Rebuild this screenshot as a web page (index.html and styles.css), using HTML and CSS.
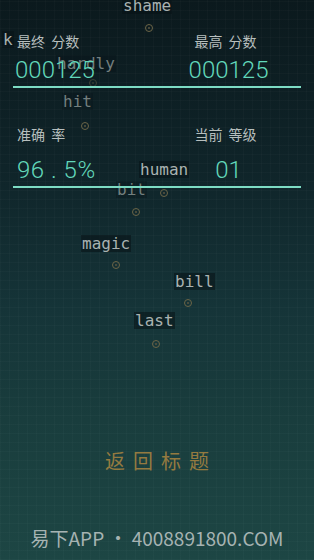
FILE: index.html
```html
<!DOCTYPE html>
<html lang="zh">
<head>
<meta charset="utf-8">
<title>结果</title>
<link rel="stylesheet" href="styles.css">
</head>
<body>
<div class="screen">
  <div class="field">
    <span class="word" style="left:122px;top:-3px">shame</span>
    <span class="ring" style="left:145px;top:24px"></span>
    <span class="word" style="left:2px;top:31px">k</span>
    <span class="word dim" style="left:56px;top:55px">hardly</span>
    <span class="ring dim" style="left:89px;top:79px"></span>
    <span class="word dim" style="left:62px;top:93px">hit</span>
    <span class="ring" style="left:81px;top:122px"></span>
    <span class="word" style="left:139px;top:161px">human</span>
    <span class="ring" style="left:160px;top:189px"></span>
    <span class="word dim" style="left:116px;top:181px">bit</span>
    <span class="ring" style="left:132px;top:208px"></span>
    <span class="word" style="left:81px;top:235px">magic</span>
    <span class="ring" style="left:112px;top:261px"></span>
    <span class="word" style="left:174px;top:273px">bill</span>
    <span class="ring" style="left:184px;top:299px"></span>
    <span class="word" style="left:134px;top:312px">last</span>
    <span class="ring" style="left:152px;top:340px"></span>
  </div>

  <section class="stats">
    <div class="row">
      <div class="cell">
        <div class="label">最终 分数</div>
        <div class="value">000125</div>
      </div>
      <div class="cell center">
        <div class="label">最高 分数</div>
        <div class="value">000125</div>
      </div>
    </div>
    <div class="row second">
      <div class="cell">
        <div class="label">准确 率</div>
        <div class="value spaced">96 . 5%</div>
      </div>
      <div class="cell center">
        <div class="label">当前 等级</div>
        <div class="value">01</div>
      </div>
    </div>
  </section>

  <div class="spacer"></div>
  <button class="back">返回标题</button>
  <footer class="footer">易下APP • 4008891800.COM</footer>
</div>
</body>
</html>
```

FILE: styles.css
```css
html, body {
  margin: 0;
  padding: 0;
  background: #0d1b1f;
}

.screen {
  position: relative;
  width: 314px;
  height: 560px;
  overflow: hidden;
  display: flex;
  flex-direction: column;
  padding-bottom: 10px;
  box-sizing: border-box;
  background:
    repeating-linear-gradient(0deg, rgba(255,255,255,0.018) 0 1px, transparent 1px 9px),
    repeating-linear-gradient(90deg, rgba(255,255,255,0.018) 0 1px, transparent 1px 9px),
    linear-gradient(180deg, #0b191d 0%, #0f2429 30%, #153438 55%, #193d3d 75%, #1d4644 100%);
  font-family: "Noto Sans CJK SC", "Noto Sans", sans-serif;
}

.field {
  position: absolute;
  inset: 0;
  z-index: 0;
}

.word {
  position: absolute;
  font-family: "DejaVu Sans Mono", monospace;
  font-size: 16px;
  line-height: 17px;
  padding: 0 1px;
  color: #a9b2b1;
  background: rgba(8, 18, 22, 0.55);
  white-space: nowrap;
}

.word.dim {
  color: #737f7e;
  background: rgba(8, 18, 22, 0.3);
}

.ring {
  position: absolute;
  width: 6px;
  height: 6px;
  border: 1px solid #6b6547;
  border-radius: 50%;
  box-sizing: content-box;
}

.ring::after {
  content: "";
  position: absolute;
  left: 2px;
  top: 2px;
  width: 2px;
  height: 2px;
  border-radius: 50%;
  background: #5a5640;
}

.ring.dim {
  opacity: 0.5;
}

.stats {
  position: relative;
  z-index: 1;
  margin: 31px 13px 0 13px;
}

.row {
  display: grid;
  grid-template-columns: 137px 1fr;
  border-bottom: 2px solid #7ddcc4;
  padding-bottom: 2px;
}

.row.second {
  margin-top: 36px;
}

.row.second .label {
  margin-bottom: 12px;
}

.cell.center {
  text-align: center;
}

.label {
  font-size: 14px;
  line-height: 20px;
  color: #b7bfbe;
  padding-left: 4px;
  margin-bottom: 5px;
  white-space: pre;
  word-spacing: 3px;
}

.cell.center .label {
  padding-left: 0;
}

.value {
  font-family: Roboto, "Noto Sans", sans-serif;
  font-weight: 300;
  font-size: 24px;
  line-height: 28px;
  color: #62d8bb;
  white-space: pre;
  padding-left: 2px;
}

.cell.center .value {
  padding-left: 6px;
}

.value.spaced {
  letter-spacing: 0.5px;
  padding-left: 4px;
}

.spacer {
  flex: 1;
}

.back {
  position: relative;
  z-index: 1;
  align-self: center;
  background: none;
  border: 0;
  padding: 0 0 0 8px;
  font-family: "Noto Sans CJK SC", sans-serif;
  font-size: 20px;
  line-height: 28px;
  letter-spacing: 8px;
  color: #947a40;
}

.footer {
  position: relative;
  z-index: 1;
  margin-top: 50px;
  text-align: center;
  font-size: 19px;
  line-height: 25px;
  color: #a6b3b2;
  white-space: nowrap;
}
```
